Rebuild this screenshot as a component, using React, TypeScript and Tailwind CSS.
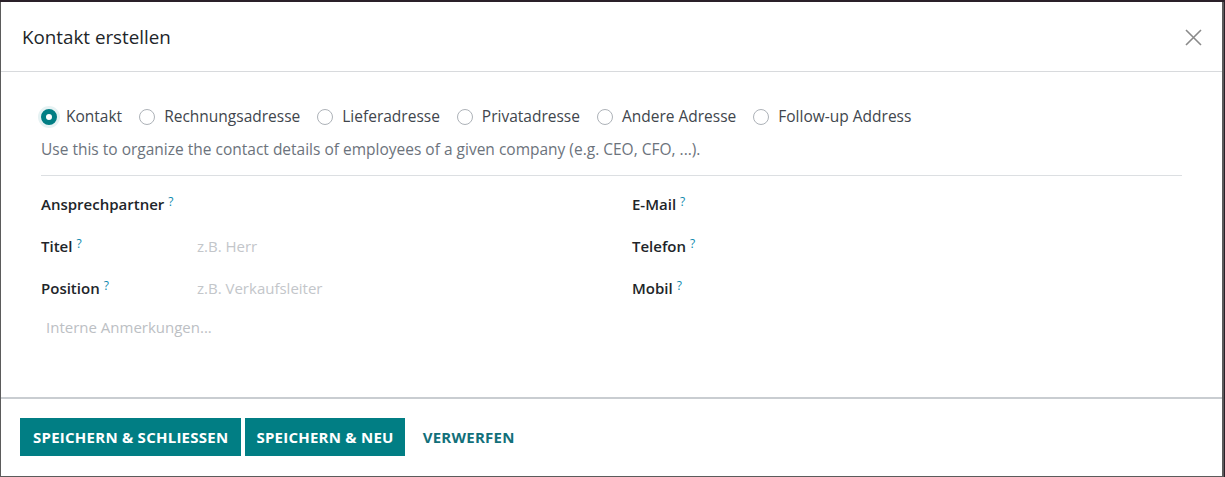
import React, { useState } from "react";

const addressTypes = [
  "Kontakt",
  "Rechnungsadresse",
  "Lieferadresse",
  "Privatadresse",
  "Andere Adresse",
  "Follow-up Address",
];

const leftFields = [
  { label: "Ansprechpartner", placeholder: "" },
  { label: "Titel", placeholder: "z.B. Herr" },
  { label: "Position", placeholder: "z.B. Verkaufsleiter" },
];

const rightFields = ["E-Mail", "Telefon", "Mobil"];

const Hint: React.FC = () => (
  <sup className="ml-[4px] text-[12px] font-normal text-[#0e8aae] relative -top-[4px]">?</sup>
);

const Radio: React.FC<{ checked: boolean; label: string; onSelect: () => void }> = ({
  checked,
  label,
  onSelect,
}) => (
  <label className="flex items-center cursor-pointer" onClick={onSelect}>
    {checked ? (
      <span className="w-4 h-4 rounded-full border-[5px] border-[#017e84] bg-white ring-[3px] ring-[#e6f2f3]" />
    ) : (
      <span className="w-4 h-4 rounded-full border border-[#adb2b8] bg-white" />
    )}
    <span className="ml-[9px] text-[15.5px] text-[#41464d]">{label}</span>
  </label>
);

const App: React.FC = () => {
  const [selected, setSelected] = useState(0);

  return (
    <div
      className="w-[1225px] h-[477px] bg-[#2a2029] pt-[2px] overflow-hidden"
      style={{ fontFamily: '"Open Sans", "Noto Sans", sans-serif' }}
    >
      <div className="h-[475px] w-[1224px] bg-white border-l border-r-2 border-b border-[#5b5b5b] flex flex-col">
        {/* header */}
        <div className="h-[70px] flex items-center justify-between pl-[21px] pr-[20px] pt-[2px] border-b border-[#d8dadd]">
          <h4 className="text-[18.8px] font-medium text-[#212529]">Kontakt erstellen</h4>
          <button className="w-[18px] h-[18px] flex items-center justify-center">
            <svg width="17" height="17" viewBox="0 0 17 17" fill="none">
              <path d="M1 1L16 16M16 1L1 16" stroke="#8a8a8a" strokeWidth="1.6" />
            </svg>
          </button>
        </div>

        {/* body */}
        <div className="flex-1 px-[40px] pt-[34px]">
          <div className="flex items-center gap-[17px] h-[22px]">
            {addressTypes.map((t, i) => (
              <Radio key={t} label={t} checked={selected === i} onSelect={() => setSelected(i)} />
            ))}
          </div>
          <p className="mt-[11px] text-[15.5px] text-[#6c737c] leading-[20px]">
            Use this to organize the contact details of employees of a given company (e.g. CEO, CFO, ...).
          </p>
          <div className="mt-[16px] border-t border-[#dcdfe2]" />

          <div className="grid grid-cols-[591px_1fr] mt-[17px]">
            <div className="flex flex-col gap-[20px]">
              {leftFields.map((f) => (
                <div key={f.label} className="flex items-center h-[22px]">
                  <span className="w-[156px] text-[15px] font-semibold text-[#212529]">
                    {f.label}
                    <Hint />
                  </span>
                  <span className="text-[15px] text-[#c3c6ca]">{f.placeholder}</span>
                </div>
              ))}
            </div>
            <div className="flex flex-col gap-[20px]">
              {rightFields.map((f) => (
                <div key={f} className="flex items-center h-[22px]">
                  <span className="text-[15px] font-semibold text-[#212529]">
                    {f}
                    <Hint />
                  </span>
                </div>
              ))}
            </div>
          </div>

          <p className="mt-[17px] ml-[5px] text-[15px] text-[#bcc0c4]">Interne Anmerkungen...</p>
        </div>

        {/* footer */}
        <div className="h-[79px] border-t-2 border-[#c9cdd1] flex items-start gap-[4px] pl-[19px] pt-[19px]">
          <button className="h-[38px] px-[13px] bg-[#017e84] text-white text-[15px] tracking-[0.25px] font-bold">
            SPEICHERN &amp; SCHLIESSEN
          </button>
          <button className="h-[38px] px-[11px] bg-[#017e84] text-white text-[15px] tracking-[0.25px] font-bold">
            SPEICHERN &amp; NEU
          </button>
          <button className="h-[38px] px-[14px] text-[#12707a] text-[15px] tracking-[0.25px] font-bold">
            VERWERFEN
          </button>
        </div>
      </div>
    </div>
  );
};

export default App;
